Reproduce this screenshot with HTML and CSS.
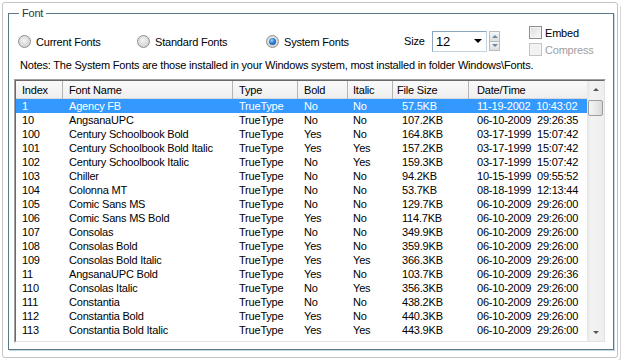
FILE: index.html
```html
<!DOCTYPE html>
<html lang="en">
<head>
  <meta charset="UTF-8" />
  <title>Font</title>
  <link rel="stylesheet" href="styles.css">
</head>
<body>
  <div class="window">
    <fieldset class="group">
      <legend>Font</legend>

      <div class="options">
        <label class="radio opt-current"><span class="radio-dot"></span>Current Fonts</label>
        <label class="radio opt-standard"><span class="radio-dot"></span>Standard Fonts</label>
        <label class="radio opt-system"><span class="radio-dot checked"></span>System Fonts</label>
        <span class="size-label">Size</span>
        <div class="combo">
          <span class="combo-value">12</span>
          <span class="combo-arrow"></span>
        </div>
        <div class="spin">
          <span class="spin-btn up"></span>
          <span class="spin-btn down"></span>
        </div>
        <div class="checks">
          <label class="check"><span class="check-box"></span>Embed</label>
          <label class="check disabled"><span class="check-box"></span>Compress</label>
        </div>
      </div>

      <p class="notes">Notes: The System Fonts are those installed in your Windows system, most installed in folder Windows\Fonts.</p>

      <div class="listbox">
        <div class="list-inner">
          <table class="grid">
            <colgroup>
              <col class="w-index"><col class="w-name"><col class="w-type"><col class="w-bold">
              <col class="w-italic"><col class="w-size"><col class="w-date">
            </colgroup>
            <thead>
              <tr>
                <th>Index</th><th>Font Name</th><th>Type</th><th>Bold</th>
                <th class="c-italic">Italic</th><th class="c-size">File Size</th><th class="c-date">Date/Time</th>
              </tr>
            </thead>
            <tbody>
              <tr class="selected"><td>1</td><td>Agency FB</td><td>TrueType</td><td>No</td><td class="c-italic">No</td><td class="c-size">57.5KB</td><td class="c-date">11-19-2002  10:43:02</td></tr>
              <tr><td>10</td><td>AngsanaUPC</td><td>TrueType</td><td>No</td><td class="c-italic">No</td><td class="c-size">107.2KB</td><td class="c-date">06-10-2009  29:26:35</td></tr>
              <tr><td>100</td><td>Century Schoolbook Bold</td><td>TrueType</td><td>Yes</td><td class="c-italic">No</td><td class="c-size">164.8KB</td><td class="c-date">03-17-1999  15:07:42</td></tr>
              <tr><td>101</td><td>Century Schoolbook Bold Italic</td><td>TrueType</td><td>Yes</td><td class="c-italic">Yes</td><td class="c-size">157.2KB</td><td class="c-date">03-17-1999  15:07:42</td></tr>
              <tr><td>102</td><td>Century Schoolbook Italic</td><td>TrueType</td><td>No</td><td class="c-italic">Yes</td><td class="c-size">159.3KB</td><td class="c-date">03-17-1999  15:07:42</td></tr>
              <tr><td>103</td><td>Chiller</td><td>TrueType</td><td>No</td><td class="c-italic">No</td><td class="c-size">94.2KB</td><td class="c-date">10-15-1999  09:55:52</td></tr>
              <tr><td>104</td><td>Colonna MT</td><td>TrueType</td><td>No</td><td class="c-italic">No</td><td class="c-size">53.7KB</td><td class="c-date">08-18-1999  12:13:44</td></tr>
              <tr><td>105</td><td>Comic Sans MS</td><td>TrueType</td><td>No</td><td class="c-italic">No</td><td class="c-size">129.7KB</td><td class="c-date">06-10-2009  29:26:00</td></tr>
              <tr><td>106</td><td>Comic Sans MS Bold</td><td>TrueType</td><td>Yes</td><td class="c-italic">No</td><td class="c-size">114.7KB</td><td class="c-date">06-10-2009  29:26:00</td></tr>
              <tr><td>107</td><td>Consolas</td><td>TrueType</td><td>No</td><td class="c-italic">No</td><td class="c-size">349.9KB</td><td class="c-date">06-10-2009  29:26:00</td></tr>
              <tr><td>108</td><td>Consolas Bold</td><td>TrueType</td><td>Yes</td><td class="c-italic">No</td><td class="c-size">359.9KB</td><td class="c-date">06-10-2009  29:26:00</td></tr>
              <tr><td>109</td><td>Consolas Bold Italic</td><td>TrueType</td><td>Yes</td><td class="c-italic">Yes</td><td class="c-size">366.3KB</td><td class="c-date">06-10-2009  29:26:00</td></tr>
              <tr><td>11</td><td>AngsanaUPC Bold</td><td>TrueType</td><td>Yes</td><td class="c-italic">No</td><td class="c-size">103.7KB</td><td class="c-date">06-10-2009  29:26:36</td></tr>
              <tr><td>110</td><td>Consolas Italic</td><td>TrueType</td><td>No</td><td class="c-italic">Yes</td><td class="c-size">356.3KB</td><td class="c-date">06-10-2009  29:26:00</td></tr>
              <tr><td>111</td><td>Constantia</td><td>TrueType</td><td>No</td><td class="c-italic">No</td><td class="c-size">438.2KB</td><td class="c-date">06-10-2009  29:26:00</td></tr>
              <tr><td>112</td><td>Constantia Bold</td><td>TrueType</td><td>Yes</td><td class="c-italic">No</td><td class="c-size">440.3KB</td><td class="c-date">06-10-2009  29:26:00</td></tr>
              <tr><td>113</td><td>Constantia Bold Italic</td><td>TrueType</td><td>Yes</td><td class="c-italic">Yes</td><td class="c-size">443.9KB</td><td class="c-date">06-10-2009  29:26:00</td></tr>
            </tbody>
          </table>
          <div class="scrollbar">
            <span class="scroll-btn"><span class="arrow-up"></span></span>
            <span class="scroll-thumb"></span>
            <span class="scroll-track"></span>
            <span class="scroll-btn"><span class="arrow-down"></span></span>
          </div>
        </div>
      </div>
    </fieldset>
  </div>
</body>
</html>
```

FILE: styles.css
```css
body {
  margin: 0;
  background: #fff;
  color: #000;
  font-family: "Liberation Sans", Arial, sans-serif;
  font-size: 11px;
  letter-spacing: -0.2px;
}
.window {
  margin: 2px;
  width: 616px;
  height: 356px;
  box-sizing: border-box;
  padding: 4px 0 0 5px;
  border: 1px solid #c3c3c3;
  border-radius: 3px;
  box-shadow: 2px 2px 0 #fff, 3px 3px 0 #d6d6d6;
}
.group {
  margin: 0;
  padding: 0 0 6px 0;
  width: 606px;
  box-sizing: border-box;
  min-inline-size: 0;
  border: 1px solid #587888;
  box-shadow: 1px 1px 0 #c4d8e6;
}
.group legend {
  margin-left: 10px;
  padding: 0 3px;
  line-height: 13px;
  color: #333;
}

/* top option row */
.options {
  display: flex;
  align-items: center;
  height: 34px;
  margin-top: 4px;
  padding-left: 9px;
}
.radio {
  display: flex;
  align-items: center;
  gap: 5px;
  margin-top: 1px;
}
.opt-current { width: 119px; }
.opt-standard { width: 129px; }
.opt-system { width: 138px; }
.radio-dot {
  width: 13px;
  height: 13px;
  box-sizing: border-box;
  border-radius: 50%;
  border: 1px solid #8e8f8f;
  background: radial-gradient(circle at 45% 40%, #f4f4f4 0, #dadada 55%, #c9c9c9 100%);
  display: flex;
  align-items: center;
  justify-content: center;
}
.radio-dot.checked::after {
  content: "";
  width: 7px;
  height: 7px;
  border-radius: 50%;
  background: radial-gradient(circle at 40% 35%, #9fd4ff 0, #2c7bd0 45%, #124f93 100%);
}
.size-label { width: 28px; }
.combo {
  width: 55px;
  height: 21px;
  box-sizing: border-box;
  border: 1px solid;
  border-color: #8ea6bd #c3d3e1 #c3d3e1 #8ea6bd;
  display: flex;
  align-items: center;
  padding-left: 3px;
}
.combo-value {
  flex: 1;
  font-size: 13px;
}
.combo-arrow {
  margin-right: 4px;
  border-left: 4px solid transparent;
  border-right: 4px solid transparent;
  border-top: 4px solid #000;
}
.spin {
  margin-left: 2px;
  width: 11px;
  height: 20px;
  display: flex;
  flex-direction: column;
}
.spin-btn {
  flex: 1;
  display: flex;
  align-items: center;
  justify-content: center;
  border: 1px solid #bcbcbc;
  background: linear-gradient(#f6f6f6, #dedede);
}
.spin-btn + .spin-btn { border-top: 0; }
.spin-btn.up::after {
  content: "";
  border-left: 3px solid transparent;
  border-right: 3px solid transparent;
  border-bottom: 3px solid #6a87a3;
}
.spin-btn.down::after {
  content: "";
  border-left: 3px solid transparent;
  border-right: 3px solid transparent;
  border-top: 3px solid #6a87a3;
}
.checks {
  margin-left: 29px;
  display: flex;
  flex-direction: column;
}
.check {
  display: flex;
  align-items: center;
  gap: 3px;
  height: 17px;
  font-size: 11px;
}
.check-box {
  width: 13px;
  height: 13px;
  box-sizing: border-box;
  border: 1px solid #8e8f8f;
  background: linear-gradient(135deg, #dcdcdc, #fbfbfb);
  box-shadow: inset 0 0 0 1px #f4f4f4;
}
.check.disabled { color: #a0a0a0; }
.check.disabled .check-box {
  border-color: #c4c4c4;
  background: #f2f2f2;
}

.notes {
  margin: 0 0 0 11px;
  line-height: 14px;
}

/* font list */
.listbox {
  margin: 7px 0 0 5px;
  width: 592px;
  height: 264px;
  box-sizing: border-box;
  border: 1px solid;
  border-color: #a0a0a0 #fff #fff #a0a0a0;
}
.list-inner {
  height: 100%;
  box-sizing: border-box;
  display: flex;
  align-items: flex-start;
  border: 1px solid;
  border-color: #696969 #e3e3e3 #e3e3e3 #696969;
  background: #fff;
}
.grid {
  width: 571px;
  flex: none;
  table-layout: fixed;
  border-collapse: collapse;
}
.w-index { width: 47px; }
.w-name { width: 170px; }
.w-type { width: 65px; }
.w-bold { width: 50px; }
.w-italic { width: 45px; }
.w-size { width: 76px; }
.w-date { width: 118px; }
.grid th {
  height: 18px;
  padding: 0 0 0 6px;
  font-weight: normal;
  text-align: left;
  background: linear-gradient(#fafafa, #eeeeee);
  box-shadow: inset -1px 0 0 #b4b4b4, inset 0 -1px 0 #d8d8d8;
  white-space: nowrap;
}
.grid th:last-child { box-shadow: inset 0 -1px 0 #d8d8d8; }
.grid td {
  height: 14px;
  padding: 0 0 0 6px;
  line-height: 14px;
  white-space: pre;
  overflow: hidden;
}
.grid .c-italic { padding-left: 5px; }
.grid th.c-size { padding-left: 4px; }
.grid td.c-size { padding-left: 9px; }
.grid .c-date { padding-left: 8px; }
.grid tr.selected td {
  background: #3399ff;
  color: #fff;
}

.scrollbar {
  width: 17px;
  height: 100%;
  display: flex;
  flex-direction: column;
  background: linear-gradient(90deg, #e6e6e6, #f3f3f3 25%, #eeeeee);
}
.scroll-btn {
  height: 17px;
  display: flex;
  align-items: center;
  justify-content: center;
}
.arrow-up {
  border-left: 3px solid transparent;
  border-right: 3px solid transparent;
  border-bottom: 3px solid #555;
}
.arrow-down {
  border-left: 3px solid transparent;
  border-right: 3px solid transparent;
  border-top: 3px solid #555;
}
.scroll-thumb {
  margin: 2px 1px 0 1px;
  height: 16px;
  box-sizing: border-box;
  border: 1px solid #9c9c9c;
  border-radius: 2px;
  background: linear-gradient(90deg, #f6f6f6, #e6e6e6 60%, #d8d8d8);
}
.scroll-track { flex: 1; }
```
